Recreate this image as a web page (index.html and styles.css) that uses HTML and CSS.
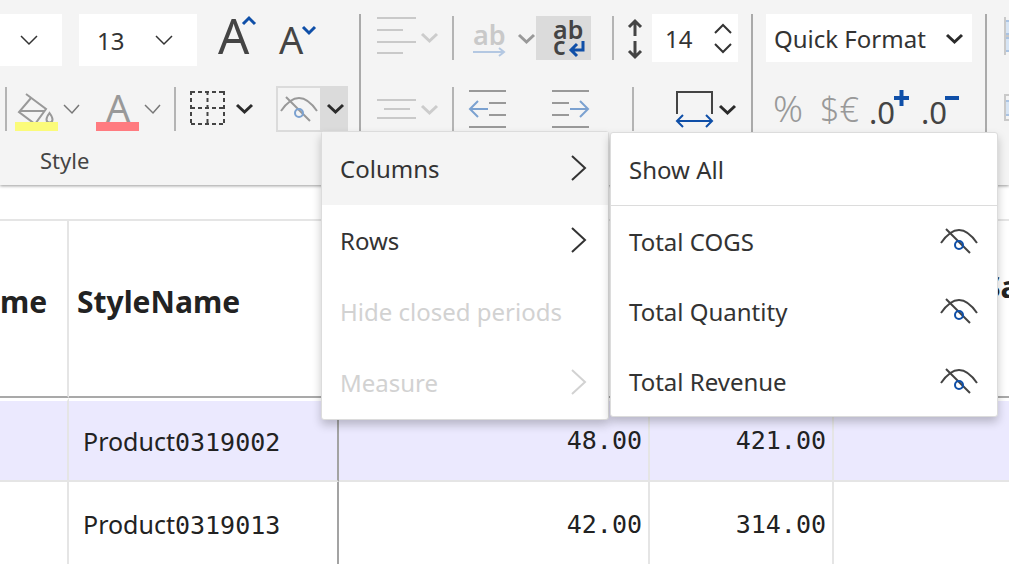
FILE: index.html
```html
<!DOCTYPE html>
<html lang="en">
  <head>
    <meta charset="UTF-8" />
    <title>Report Designer</title>
    <meta name="viewport" content="width=device-width, initial-scale=1.0" />
    <link rel="stylesheet" href="styles.css">
  </head>
  <body>
    <!-- TOOLBAR -->
    <div class="toolbar">
      <!-- Style -->
      <section class="group style-group">
        <div class="row font-row">
          <label class="picker font-picker">
            <select aria-label="Font"><option></option></select>
            <svg class="chevron" width="18" height="10" viewBox="0 0 18 10"><path d="M1 1l8 8 8-8" /></svg>
          </label>
          <label class="picker size-picker">
            <select aria-label="Font size"><option>13</option></select>
            <svg class="chevron" width="18" height="10" viewBox="0 0 18 10"><path d="M1 1l8 8 8-8" /></svg>
          </label>
          <button class="tool letter" aria-label="Increase font size">
            <svg width="37" height="52" viewBox="0 0 37 52">
              <text x="0" y="40" font-size="49">A</text>
              <path class="blue thick" d="M25 10l6-6 6 6" />
            </svg>
          </button>
          <button class="tool letter" aria-label="Decrease font size">
            <svg width="36" height="52" viewBox="0 0 36 52">
              <text x="-1" y="40" font-size="38">A</text>
              <path class="blue thick" d="M23 13l6 6 6-6" />
            </svg>
          </button>
        </div>

        <div class="row color-row">
          <span class="sep"></span>
          <div class="split">
            <button class="tool" aria-label="Fill color">
              <svg width="43" height="46" viewBox="0 0 43 46">
                <path class="gray" d="M11 8l20 15L20 38 4 26 16 12M5 25h25" />
                <path class="gray" d="M34.500 27q-3 4-3 6.500a3 3 0 0 0 6 0q0-2.500-3-6.500z" />
                <rect x="0" y="36" width="43" height="9" fill="#fbfb7a" />
              </svg>
            </button>
            <button class="tool" aria-label="Fill color options">
              <svg class="chevron soft" width="17" height="10" viewBox="0 0 17 10"><path d="M1 1l8 8 7-8" /></svg>
            </button>
          </div>
          <div class="split">
            <button class="tool" aria-label="Font color">
              <svg width="43" height="46" viewBox="0 0 43 46">
                <text class="faded" x="10" y="36" font-size="38">A</text>
                <rect x="0" y="36" width="43" height="9" fill="#ff7b80" />
              </svg>
            </button>
            <button class="tool" aria-label="Font color options">
              <svg class="chevron soft" width="17" height="10" viewBox="0 0 17 10"><path d="M1 1l8 8 7-8" /></svg>
            </button>
          </div>
          <span class="sep"></span>
          <div class="split wide">
            <button class="tool" aria-label="Borders">
              <svg width="35" height="46" viewBox="0 0 35 46">
                <path class="dark" stroke-dasharray="4 3" d="M1 6h33M1 22h33M1 38h33M1 5v34M17.500 5v34M34 5v34" />
              </svg>
            </button>
            <button class="tool" aria-label="Border options">
              <svg class="chevron bold" width="17" height="11" viewBox="0 0 17 11"><path d="M1 1l7.500 7L16 1" /></svg>
            </button>
          </div>

          <div class="hide-tool">
            <button class="hide-main" aria-label="Hide">
              <svg width="38" height="26" viewBox="0 0 38 26">
                <path class="gray" d="M1 15q18-26 36 0M6 1l24 24" />
                <circle class="lightblue" cx="19" cy="17" r="4" />
              </svg>
            </button>
            <button class="hide-arrow" aria-label="Hide options" aria-expanded="true">
              <svg class="chevron bold" width="17" height="11" viewBox="0 0 17 11"><path d="M1 1l7.500 7L16 1" /></svg>
            </button>

            <!-- Hide menu -->
            <div class="menu">
              <button class="menu-item active">Columns
                <svg width="15" height="26" viewBox="0 0 15 26"><path d="M1 0l13 12L1 24" /></svg>
              </button>
              <button class="menu-item">Rows
                <svg width="15" height="26" viewBox="0 0 15 26"><path d="M1 0l13 12L1 24" /></svg>
              </button>
              <button class="menu-item" disabled>Hide closed periods</button>
              <button class="menu-item" disabled>Measure
                <svg width="15" height="26" viewBox="0 0 15 26"><path d="M1 0l13 12L1 24" /></svg>
              </button>

              <!-- Columns submenu -->
              <div class="submenu">
                <button class="menu-item show-all">Show All</button>
                <button class="menu-item">Total COGS
                  <svg width="38" height="26" viewBox="0 0 38 26">
                    <path class="dark" d="M1 15q18-26 36 0M6 1l24 24" />
                    <circle class="blue" cx="19" cy="17" r="4" />
                  </svg>
                </button>
                <button class="menu-item">Total Quantity
                  <svg width="38" height="26" viewBox="0 0 38 26">
                    <path class="dark" d="M1 15q18-26 36 0M6 1l24 24" />
                    <circle class="blue" cx="19" cy="17" r="4" />
                  </svg>
                </button>
                <button class="menu-item">Total Revenue
                  <svg width="38" height="26" viewBox="0 0 38 26">
                    <path class="dark" d="M1 15q18-26 36 0M6 1l24 24" />
                    <circle class="blue" cx="19" cy="17" r="4" />
                  </svg>
                </button>
              </div>
            </div>
          </div>
        </div>
        <div class="group-name">Style</div>
      </section>

      <!-- Alignment -->
      <section class="group align-group">
        <div class="row align-row">
          <div class="split">
            <button class="tool" aria-label="Horizontal align" disabled>
              <svg width="39" height="48" viewBox="0 0 39 48"><path class="pale" d="M0 4h39M0 16h26M0 28h39M0 39h26" /></svg>
            </button>
            <button class="tool" aria-label="Horizontal align options" disabled>
              <svg class="chevron bold off" width="17" height="11" viewBox="0 0 17 11"><path d="M1 1l7.500 7L16 1" /></svg>
            </button>
          </div>
          <span class="sep"></span>
          <button class="tool" aria-label="Text overflow" disabled>
            <svg width="33" height="48" viewBox="0 0 33 48">
              <text class="off-text" x="0" y="31" font-size="27">ab</text>
              <path class="paleblue" d="M0 38h31M26 34l5 4-5 4" />
            </svg>
          </button>
          <button class="tool" aria-label="Text overflow options">
            <svg class="chevron bold mid" width="17" height="11" viewBox="0 0 17 11"><path d="M1 2l7.500 7L16 2" /></svg>
          </button>
          <button class="tool wrap-btn" aria-label="Wrap text" aria-pressed="true">
            <svg width="55" height="44" viewBox="0 0 55 44">
              <text class="semi" x="17" y="23" font-size="25">ab</text>
              <text class="semi" x="17" y="39" font-size="25">c</text>
              <path class="blue thick" d="M47 25v9H35M41 28l-6 6 6 6" />
            </svg>
          </button>
          <span class="sep"></span>
          <svg width="14" height="48" viewBox="0 0 14 48">
            <path class="dark thick" d="M7 22V8M1 13l6-6 6 6M7 27v15M1 37l6 6 6-6" />
          </svg>
          <div class="spinner">
            <input type="number" aria-label="Row height" value="14" />
            <div class="spin-buttons">
              <button class="tool" aria-label="Increase">
                <svg class="chevron heavy" width="18" height="11" viewBox="0 0 18 11"><path d="M1 10l8-8 8 8" /></svg>
              </button>
              <button class="tool" aria-label="Decrease">
                <svg class="chevron heavy" width="18" height="11" viewBox="0 0 18 11"><path d="M1 1l8 8 8-8" /></svg>
              </button>
            </div>
          </div>
        </div>

        <div class="row indent-row">
          <div class="split">
            <button class="tool" aria-label="Vertical align" disabled>
              <svg width="39" height="46" viewBox="0 0 39 46"><path class="pale" d="M0 14h39M7 23h26M0 32h39" /></svg>
            </button>
            <button class="tool" aria-label="Vertical align options" disabled>
              <svg class="chevron bold off" width="17" height="11" viewBox="0 0 17 11"><path d="M1 2l7.500 7L16 2" /></svg>
            </button>
          </div>
          <span class="sep"></span>
          <button class="tool" aria-label="Decrease indent">
            <svg width="37" height="46" viewBox="0 0 37 46">
              <path class="gray" d="M0 5h37M20 17h17M20 29h17M0 41h37" />
              <path class="lightblue" d="M19 23H2M9 15l-8 8 8 8" />
            </svg>
          </button>
          <button class="tool" aria-label="Increase indent">
            <svg width="37" height="46" viewBox="0 0 37 46">
              <path class="gray" d="M0 5h37M0 17h17M0 29h17M0 41h37" />
              <path class="lightblue" d="M18 23h17M28 15l8 8-8 8" />
            </svg>
          </button>
          <span class="sep"></span>
          <div class="split">
            <button class="tool" aria-label="Column width">
              <svg width="38" height="46" viewBox="0 0 38 46">
                <path class="dark" d="M1 28V6h35v22" />
                <path class="blue" d="M1 35h35M7 29l-6 6 6 6M30 29l6 6-6 6" />
              </svg>
            </button>
            <button class="tool" aria-label="Column width options">
              <svg class="chevron bold" width="17" height="11" viewBox="0 0 17 11"><path d="M1 2l7.500 7L16 2" /></svg>
            </button>
          </div>
        </div>
      </section>

      <!-- Number format -->
      <section class="group format-group">
        <div class="row">
          <label class="picker format-picker">
            <select aria-label="Quick Format"><option>Quick Format</option></select>
            <svg class="chevron bold" width="17" height="11" viewBox="0 0 17 11"><path d="M1 2l7.500 7L16 2" /></svg>
          </label>
        </div>
        <div class="row number-row">
          <button class="tool" aria-label="Percent">
            <svg width="31" height="46" viewBox="0 0 31 46"><text class="light" x="0" y="36" font-size="37">%</text></svg>
          </button>
          <button class="tool" aria-label="Currency">
            <svg width="40" height="46" viewBox="0 0 40 46"><text class="light" x="0" y="36" font-size="34">$€</text></svg>
          </button>
          <button class="tool" aria-label="Add decimal">
            <svg width="39" height="46" viewBox="0 0 39 46">
              <text x="-1" y="38" font-size="31">.0</text>
              <path class="blue solid" d="M24 12h15M31.500 4v16" />
            </svg>
          </button>
          <button class="tool" aria-label="Remove decimal">
            <svg width="39" height="46" viewBox="0 0 39 46">
              <text x="-1" y="38" font-size="31">.0</text>
              <path class="blue solid" d="M23 12h14" />
            </svg>
          </button>
        </div>
      </section>

      <!-- Table tools -->
      <section class="group table-group">
        <div class="row">
          <button class="tool" aria-label="Insert rows">
            <svg width="40" height="48" viewBox="0 0 40 48">
              <rect x="1" y="7" width="38" height="13" fill="#d6e4f4" stroke="#aac3e2" stroke-width="2" />
              <rect x="1" y="24" width="38" height="13" fill="#d6e4f4" stroke="#aac3e2" stroke-width="2" />
              <path class="pale" d="M1 3v38M0 22h40" />
            </svg>
          </button>
        </div>
        <div class="row">
          <button class="tool" aria-label="Merge cells">
            <svg width="40" height="46" viewBox="0 0 40 46">
              <rect x="1" y="15" width="38" height="14" fill="#d6e4f4" stroke="#aac3e2" stroke-width="2" />
              <path class="pale" d="M40 9H1v25h39" />
            </svg>
          </button>
        </div>
      </section>
    </div>

    <!-- DATA -->
    <table class="data">
      <colgroup>
        <col class="col-name" />
        <col class="col-style" />
        <col class="col-value" />
        <col class="col-total" />
        <col />
      </colgroup>
      <thead>
        <tr>
          <th>me</th>
          <th>StyleName</th>
          <th></th>
          <th></th>
          <th class="last-head">Sa</th>
        </tr>
      </thead>
      <tbody>
        <tr class="selected">
          <td></td>
          <td>Product<span class="num">0319002</span></td>
          <td class="num">48.00</td>
          <td class="num">421.00</td>
          <td></td>
        </tr>
        <tr>
          <td></td>
          <td>Product<span class="num">0319013</span></td>
          <td class="num">42.00</td>
          <td class="num">314.00</td>
          <td></td>
        </tr>
      </tbody>
    </table>
  </body>
</html>
```
FILE: styles.css
```css
* {
  box-sizing: border-box;
}

body {
  font-family: "Noto Sans", sans-serif;
  font-size: 24px;
  color: #333;
  background-color: #fff;
  margin: 0;
  overflow: hidden;
}

button,
input,
select {
  font: inherit;
  color: inherit;
  margin: 0;
  padding: 0;
  border: none;
  background: none;
}

svg {
  display: block;
  flex: none;
  fill: none;
  overflow: visible;
}

svg text {
  fill: #444;
}

/* TOOLBAR */
.toolbar {
  display: flex;
  height: 185px;
  padding-top: 14px;
  background: #f4f4f4;
  box-shadow: 0 1px 3px rgba(0, 0, 0, 0.4);
}

.group {
  display: grid;
  flex: none;
  grid-template-rows: 52px 46px 1fr;
  row-gap: 20px;
  border-right: 2px solid #aaa;
}

.style-group {
  width: 361px;
}

.align-group {
  padding: 0 13px 0 16px;
}

.format-group {
  padding: 0 13px;
}

.table-group {
  flex: 1 1 0;
  min-width: 0;
  padding-left: 17px;
  border-right: none;
}

.group-name {
  padding-left: 40px;
  font-size: 22px;
  line-height: 16px;
  color: #444;
}

.row {
  display: grid;
  align-items: center;
  justify-items: start;
  height: 48px;
}

.font-row {
  display: flex;
  gap: 17px;
  height: 52px;
}

.color-row {
  grid-template-columns: 10px 81px 78px 16px 86px 72px;
  height: 46px;
  padding-left: 5px;
}

.align-row {
  grid-template-columns: 75px 21px 45px 18px 76px 16px 24px 86px;
}

.indent-row {
  grid-template-columns: 75px 17px 83px 80px 44px 62px;
  height: 46px;
}

.number-row {
  grid-template-columns: 47px 50px 52px 40px;
  height: 46px;
  padding-left: 7px;
}

.table-group .row:last-child {
  height: 46px;
}

.sep {
  width: 2px;
  height: 44px;
  background: #b4b4b4;
}

.tool {
  display: block;
  cursor: pointer;
}

.tool:disabled {
  cursor: default;
}

.letter {
  padding: 0 4px;
}

.split {
  display: flex;
  align-items: center;
  gap: 5px;
}

.wide {
  gap: 11px;
}

.wrap-btn {
  background: #dbdbdb;
}

/* Drop-downs */
.picker {
  display: grid;
  align-items: center;
  background: #fff;
}

.picker select,
.picker svg {
  grid-area: 1 / 1;
}

.picker select {
  appearance: none;
  width: 100%;
  height: 100%;
  padding: 0 18px;
  border-radius: 0;
  outline: none;
}

.picker svg {
  justify-self: end;
  margin-right: 24px;
  pointer-events: none;
}

.font-picker {
  width: 62px;
  height: 52px;
}

.size-picker {
  width: 118px;
  height: 52px;
}

.format-picker {
  width: 206px;
  height: 48px;
}

.format-picker select {
  padding: 0 8px;
}

.format-picker svg {
  margin-right: 9px;
}

.spinner {
  display: flex;
  align-items: center;
  height: 48px;
  background: #fff;
}

.spinner input {
  appearance: textfield;
  width: 62px;
  padding-left: 13px;
  outline: none;
}

.spinner input::-webkit-inner-spin-button {
  display: none;
}

.spin-buttons {
  display: grid;
  gap: 9px;
  padding-right: 6px;
}

/* Icon strokes */
.chevron {
  stroke: #333;
  stroke-width: 1.5;
}

.soft {
  stroke: #777;
}

.heavy {
  stroke-width: 2;
}

.bold {
  stroke: #2b2b2b;
  stroke-width: 3;
}

.off {
  stroke: #ccc;
}

.mid {
  stroke: #999;
}

.dark {
  stroke: #444;
  stroke-width: 2;
}

.gray {
  stroke: #999;
  stroke-width: 2;
}

.pale {
  stroke: #c9c9c9;
  stroke-width: 2;
}

.blue {
  stroke: #0f4fa8;
  stroke-width: 2;
}

.lightblue {
  stroke: #7ba1d0;
  stroke-width: 2;
}

.paleblue {
  stroke: #b4c8e2;
  stroke-width: 2;
}

.thick {
  stroke-width: 3;
}

.solid {
  stroke-width: 4;
}

svg .faded {
  fill: #999;
}

svg .off-text {
  fill: #c9c9c9;
  font-weight: 600;
}

svg .semi {
  font-weight: 600;
}

svg .light {
  fill: #999;
  font-weight: 300;
}

/* Hide button with its menus */
.hide-tool {
  position: relative;
  display: flex;
  height: 46px;
}

.hide-main,
.hide-arrow {
  display: flex;
  align-items: center;
  justify-content: center;
  border: 2px solid #dbdbdb;
}

.hide-main {
  width: 46px;
}

.hide-arrow {
  width: 26px;
  background: #dbdbdb;
}

.menu,
.submenu {
  position: absolute;
  background: #fff;
  border: 1px solid #dcdcdc;
  border-radius: 3px;
  box-shadow: 0 5px 10px rgba(0, 0, 0, 0.22);
}

.menu {
  top: 45px;
  left: 45px;
  z-index: 10;
  width: 288px;
  padding-bottom: 1px;
}

.submenu {
  top: 0;
  left: calc(100% + 2px);
  width: 388px;
}

.menu-item {
  display: flex;
  align-items: center;
  justify-content: space-between;
  width: 100%;
  height: 71px;
  padding: 0 22px 0 18px;
  text-align: left;
}

.menu-item svg {
  stroke: #333;
  stroke-width: 2;
}

.menu-item .blue {
  stroke: #0f4fa8;
}

.menu-item:disabled,
.menu-item:disabled svg {
  color: #d2d2d2;
  stroke: #d2d2d2;
}

.active {
  height: 73px;
  background: #f4f4f4;
}

.submenu .menu-item {
  height: 70px;
  padding-right: 19px;
}

.submenu .show-all {
  height: 73px;
  border-bottom: 1px solid #dcdcdc;
}

/* DATA */
.data {
  width: 100%;
  margin-top: 34px;
  table-layout: fixed;
  border-collapse: separate;
  border-spacing: 0;
  border-top: 2px solid #e5e5e5;
  color: #222;
}

.col-name {
  width: 69px;
}

.col-style {
  width: 270px;
}

.col-value {
  width: 311px;
}

.col-total {
  width: 184px;
}

th,
td {
  padding: 0 6px 0 14px;
  border-right: 2px solid #e5e5e5;
  white-space: nowrap;
}

th {
  height: 177px;
  padding: 0 8px 14px;
  border-bottom: 2px solid #a9a9a9;
  font-size: 30px;
  text-align: left;
}

th:first-child {
  padding-left: 0;
}

.last-head {
  padding: 0 0 44px 150px;
}

td {
  height: 86px;
  border-bottom: 2px solid #e5e5e5;
  font-size: 25px;
}

.selected td {
  height: 84px;
  background: #ebe9fe;
  border-top: 3px solid #fff;
}

td:nth-child(2) {
  border-right: 2px solid #a3a3a3;
}

th:last-child,
td:last-child {
  border-right: none;
}

.num {
  font-family: "DejaVu Sans Mono", monospace;
  text-align: right;
}
```
